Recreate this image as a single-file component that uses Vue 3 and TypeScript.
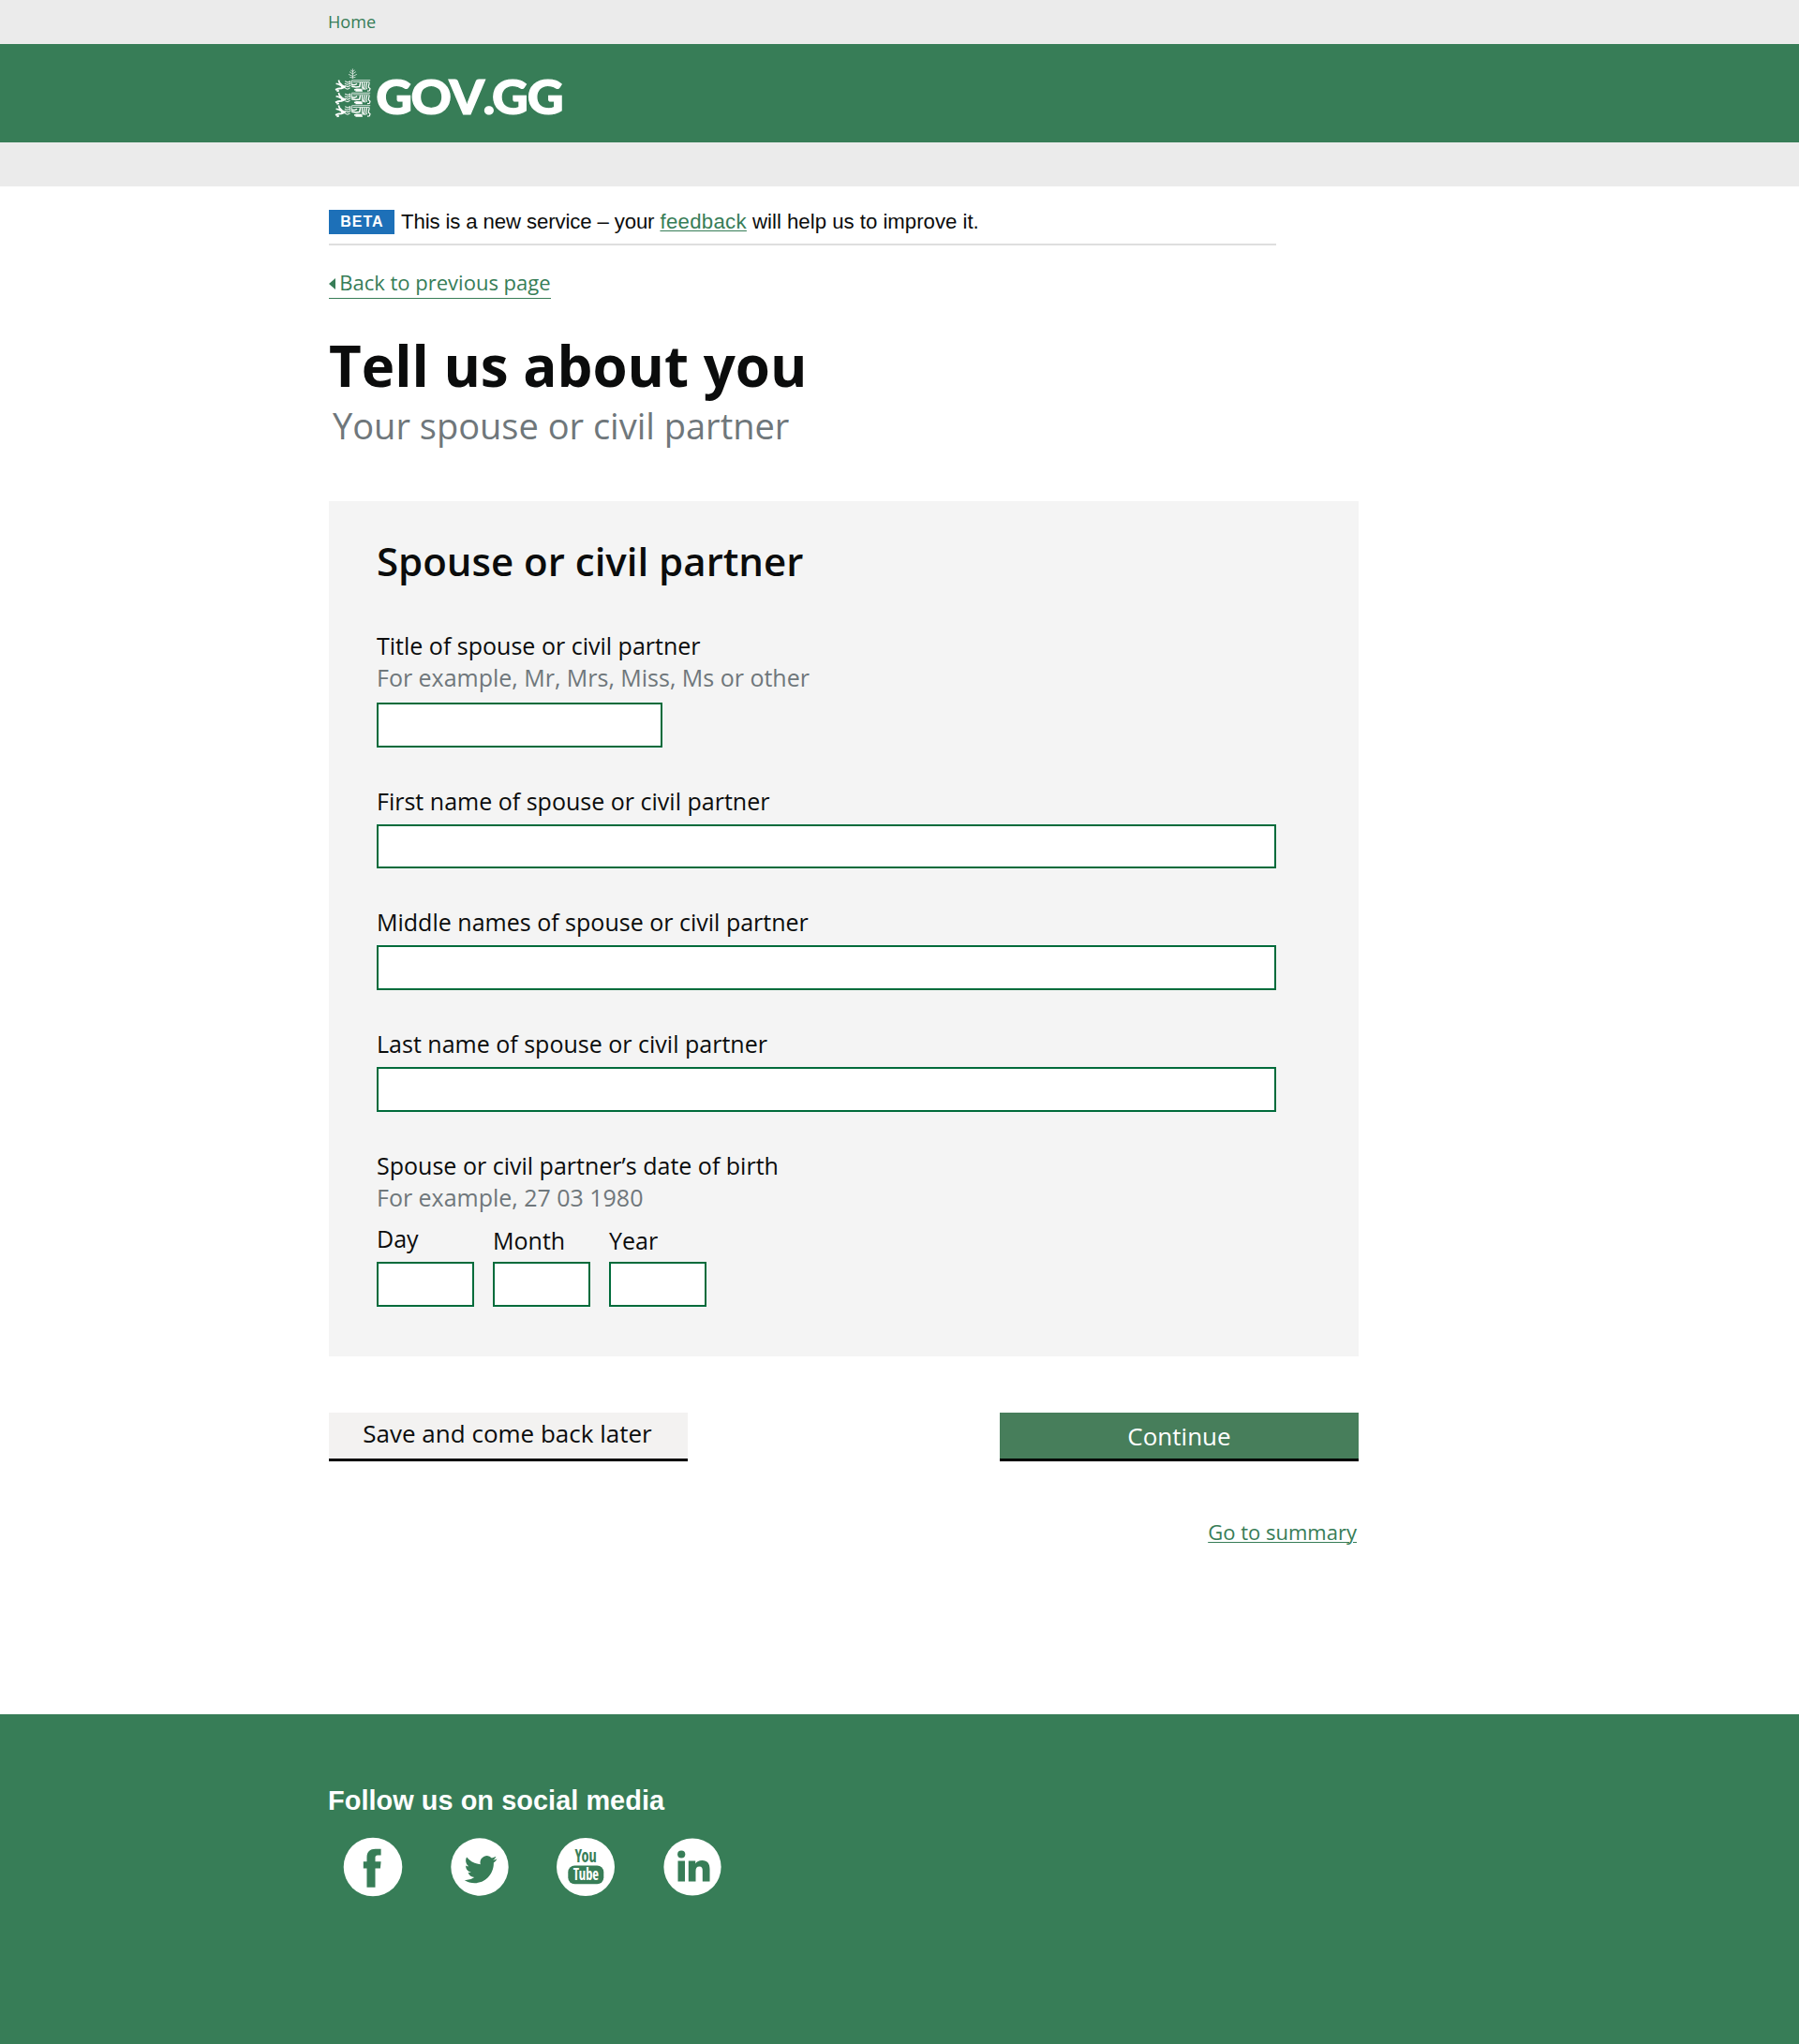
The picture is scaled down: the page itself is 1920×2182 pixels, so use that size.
<script setup lang="ts">
interface Field {
  id: string
  label: string
  hint?: string
  size: 'short' | 'full'
}

const fields: Field[] = [
  { id: 'title', label: 'Title of spouse or civil partner', hint: 'For example, Mr, Mrs, Miss, Ms or other', size: 'short' },
  { id: 'first', label: 'First name of spouse or civil partner', size: 'full' },
  { id: 'middle', label: 'Middle names of spouse or civil partner', size: 'full' },
  { id: 'last', label: 'Last name of spouse or civil partner', size: 'full' },
]

const dateParts: string[] = ['Day', 'Month', 'Year']
const lionRows: number[] = [15, 28.5, 42]
</script>

<template>
  <div class="page">
    <nav class="crumbs"><a class="crumb">Home</a></nav>
    <header class="masthead">
      <svg class="logo" viewBox="0 0 260 74" width="260" height="74">
        <g stroke="#fff" fill="none" stroke-width="0.8">
          <path d="M25.4 3.4V14M25.4 6.5l-2.2-1.6M25.4 6.5l2.2-1.6M25.4 9l-3.4-2.4M25.4 9l3.4-2.4M25.4 11.4l-4.4-2M25.4 11.4l4.4-2M25.4 13l-3-.6M25.4 13l3-.6" stroke-opacity="0.85" />
          <g v-for="y in lionRows" :key="y" :transform="`translate(0 ${y})`">
            <!-- forelegs and paws -->
            <path d="M10.4 .4l.8 2.6 3 3.2 3 1.4M7.6 4.2l3 .8 3.6 2" stroke-width="1.7" />
            <path d="M7 10.8l2.8-1.2 3.6-.4 4.4-1.6M8.4 12.4l2.4-.8M13 7.4l4 .8" stroke-width="1.9" />
            <!-- mane -->
            <path d="M17.2 1.8l3 1.2 3-1.6M16.8 4.2l3 1 3.6-1.4M17 6.6l3 1 3.4-1.4M17.4 9.2l2.6 1 2.6-1.4M22.8 1.4v4.2" stroke-width="1.1" stroke-opacity="0.9" />
            <!-- back, tail and hind legs -->
            <path d="M24.4 .7H44.2M25.6 2.5H43.4M24.6 1v4.6" />
            <path d="M24 5.6h3.6l2.6-1.2M24.2 7.2l4.6 .9 4-.6 .8-4.4M27 11l2.8-.8 4.8 .3 .4 1.4h-6.6" stroke-width="1.5" />
            <path d="M35.6 3v5.4l1.2 2.2M38.2 3.2l-.9 5.4 1.6 2.2M40.6 3.2l-1 5 1 2M43.2 3.2l-1 4.8 1.8 1.6-.6 2.2-2.4.4" stroke-width="1.2" />
          </g>
        </g>
        <text
          class="wordmark"
          transform="scale(1.05 1)"
          x="47.9 83.4 122.4 156.6 165.7 201.6"
          y="52.5"
        >GOV.GG</text>
      </svg>
    </header>
    <div class="subbar"></div>

    <main class="content">
      <div class="phase">
        <strong class="badge">BETA</strong>
        <p class="notice"><span class="lead">This is a new service – your </span><a class="feedback">feedback</a> will help us to improve it.</p>
      </div>

      <a class="back">
        <svg viewBox="0 0 7 12" width="7" height="12"><path d="M7 0v12L0 6z" fill="#377d57" /></svg>
        <span>Back to previous page</span>
      </a>

      <h1>Tell us about you</h1>
      <p class="subtitle">Your spouse or civil partner</p>

      <form class="card">
        <h2>Spouse or civil partner</h2>
        <div class="fields">
          <div v-for="f in fields" :key="f.id" class="field" :class="f.id">
            <label :for="f.id">{{ f.label }}</label>
            <span v-if="f.hint" class="hint">{{ f.hint }}</span>
            <input :id="f.id" type="text" :class="f.size" />
          </div>
          <div class="field">
            <label>Spouse or civil partner’s date of birth</label>
            <span class="hint">For example, 27 03 1980</span>
            <div class="dates">
              <div v-for="p in dateParts" :key="p" class="part">
                <label :for="p">{{ p }}</label>
                <input :id="p" type="text" />
              </div>
            </div>
          </div>
        </div>
      </form>

      <div class="actions">
        <button type="button" class="save">Save and come back later</button>
        <button type="button" class="continue">Continue</button>
      </div>
      <div class="summary"><a>Go to summary</a></div>
    </main>

    <footer class="footer">
      <h3>Follow us on social media</h3>
      <div class="social">
        <svg viewBox="0 0 64 64">
          <circle cx="32" cy="32" r="31.3" fill="#fff" />
          <path d="M25.5 53.8V33.5H21.8V26.2H25.5V22C25.5 15.6 29 12.8 34.6 12.8H40.6V19.5H37C35.2 19.5 34.5 20.4 34.5 22V26.2H40.6L39.9 33.5H34.5V53.8Z" />
        </svg>
        <svg viewBox="0 0 64 64">
          <circle cx="32" cy="32" r="30.7" fill="#fff" />
          <path transform="translate(15.7 16.8) scale(1.446 1.49)" d="M23.954 4.569a10 10 0 0 1-2.825.775 4.958 4.958 0 0 0 2.163-2.723 9.99 9.99 0 0 1-3.127 1.184 4.92 4.92 0 0 0-8.384 4.482C7.691 8.094 4.066 6.13 1.64 3.161a4.822 4.822 0 0 0-.666 2.475c0 1.71.87 3.213 2.188 4.096a4.904 4.904 0 0 1-2.228-.616v.061a4.923 4.923 0 0 0 3.946 4.827 4.996 4.996 0 0 1-2.212.085 4.937 4.937 0 0 0 4.604 3.417 9.868 9.868 0 0 1-6.102 2.105c-.39 0-.779-.023-1.17-.067a13.995 13.995 0 0 0 7.557 2.209c9.054 0 13.999-7.496 13.999-13.986 0-.209 0-.42-.015-.63a9.936 9.936 0 0 0 2.46-2.548z" />
        </svg>
        <svg viewBox="0 0 64 64">
          <circle cx="32" cy="32" r="31" fill="#fff" />
          <rect x="13.3" y="30.5" width="38" height="19.7" rx="7" />
          <text class="yt" x="20.4" y="27" font-size="20.4" textLength="23.4" lengthAdjust="spacingAndGlyphs">You</text>
          <text class="yt" x="18.8" y="45.6" font-size="17.4" fill="#fff" textLength="27.2" lengthAdjust="spacingAndGlyphs">Tube</text>
        </svg>
        <svg viewBox="0 0 64 64">
          <circle cx="32" cy="32" r="30.6" fill="#fff" />
          <circle cx="20.2" cy="18.5" r="4.1" />
          <path d="M16.5 25.5H24V47.5H16.5ZM27.8 25.5H35.2V28.6C36.5 26.2 39 24.9 42.3 24.9C48.2 24.9 50.5 28.5 50.5 34.6V47.5H42.8V36C42.8 33.2 42 31.6 39.5 31.6C36.7 31.6 35.5 33.5 35.5 36.5V47.5H27.8Z" />
        </svg>
      </div>
    </footer>
  </div>
</template>

<style>
body {
  margin: 0;
  background: #fff;
}
</style>

<style scoped>
.page {
  width: 1920px;
  height: 2182px;
  display: flex;
  flex-direction: column;
  font-family: "Open Sans", sans-serif;
  color: #0b0c0c;
}
h1, h2, h3, p { margin: 0; }
.crumbs {
  height: 47px;
  box-sizing: border-box;
  padding-left: 350px;
  background: #ebebeb;
}
.crumb {
  display: block;
  font-size: 18.09px;
  line-height: 46px;
  color: #377d57;
}
.masthead {
  height: 105px;
  box-sizing: border-box;
  padding: 23px 0 0 351px;
  background: #377d57;
}
.logo { display: block; }
.wordmark {
  font: 900 51px Lato, sans-serif;
  fill: #fff;
  stroke: #fff;
  stroke-width: 1.2px;
}
.subbar { height: 47px; background: #ebebeb; }

.content {
  width: 1099px;
  margin-left: 351px;
  padding-top: 25px;
  flex: 1;
  display: flex;
  flex-direction: column;
  align-items: flex-start;
}
.phase {
  width: 1011px;
  height: 36px;
  border-bottom: 2px solid #dedede;
  display: flex;
  align-items: flex-start;
  font-family: "Liberation Sans", Arial, sans-serif;
}
.badge {
  width: 70px;
  height: 26px;
  box-sizing: border-box;
  padding-left: 12.2px;
  background: #1d70b8;
  color: #fff;
  font-size: 16px;
  line-height: 25px;
  letter-spacing: 1px;
}
.notice {
  margin-left: 7px;
  font-size: 22.2px;
  line-height: 25px;
  white-space: nowrap;
}
.lead { letter-spacing: -0.12px; }
.feedback {
  color: #377d57;
  letter-spacing: 0.3px;
  text-decoration: underline;
  text-decoration-thickness: 1px;
  text-underline-offset: 2px;
}
.back {
  height: 32px;
  margin-top: 24px;
  border-bottom: 1px solid #377d57;
  display: flex;
  align-items: flex-start;
  gap: 4.2px;
  font-size: 22.02px;
  line-height: 30px;
  color: #377d57;
}
.back svg { margin-top: 11px; }
h1 {
  margin-top: 35px;
  font-size: 60px;
  line-height: 72px;
  font-weight: 700;
}
.subtitle {
  margin-top: 4px;
  padding-left: 4px;
  font-size: 38px;
  line-height: 48px;
  color: #6f777b;
}
.card {
  width: 1099px;
  height: 913px;
  box-sizing: border-box;
  margin-top: 57px;
  padding: 36px 51px 0;
  background: #f4f4f4;
}
h2 {
  font-size: 42px;
  line-height: 56px;
  font-weight: 600;
}
.fields {
  margin-top: 45px;
  display: flex;
  flex-direction: column;
  gap: 40px;
}
.field {
  display: flex;
  flex-direction: column;
  align-items: flex-start;
  font-size: 25.03px;
  line-height: 34px;
}
label { display: block; }
.hint { color: #6f777b; font-size: 24.98px; }
input {
  display: block;
  box-sizing: border-box;
  height: 48px;
  margin: 8px 0 0;
  padding: 0 8px;
  border: 2px solid #006b3b;
  border-radius: 0;
  background: #fff;
  font: inherit;
}
.short { width: 305px; }
.full { width: 960px; }
.hint + input { margin-top: 10px; }
.first input { height: 47px; }
.dates {
  margin-top: 10px;
  display: flex;
  gap: 20px;
}
.part input { width: 104px; }
.part:not(:first-child) label { padding-top: 2px; }
.part:not(:first-child) input { margin-top: 6px; }

.actions {
  width: 1099px;
  margin-top: 60px;
  display: flex;
  justify-content: space-between;
}
button {
  width: 383px;
  height: 52px;
  box-sizing: border-box;
  margin: 0;
  border: 0;
  border-bottom: 3px solid #000;
  display: flex;
  justify-content: center;
  align-items: flex-start;
  font: 26px/44px "Open Sans", sans-serif;
}
.save { padding: 0 2px 0 0; background: #f3f2f1; color: #0b0c0c; }
.continue { padding: 3px 0 0; background: #477e5b; color: #fff; }
.summary {
  width: 1097px;
  margin-top: 60px;
  text-align: right;
  font-size: 22.02px;
  line-height: 30px;
  color: #377d57;
}
.summary a {
  text-decoration: underline;
  text-decoration-thickness: 1px;
  text-underline-offset: 2px;
}

.footer {
  height: 352px;
  box-sizing: border-box;
  padding: 75px 0 0 350px;
  background: #377d57;
}
h3 {
  font: 700 28.86px/34px "Liberation Sans", Arial, sans-serif;
  letter-spacing: 0.06px;
  color: #fff;
}
.social {
  margin: 21.5px 0 0 16px;
  display: flex;
  gap: 49.7px;
}
.social svg {
  width: 64px;
  height: 64px;
  fill: #377d57;
}
.yt {
  font-family: "Open Sans Condensed", "Liberation Sans Narrow", sans-serif;
  font-weight: 700;
}
</style>
